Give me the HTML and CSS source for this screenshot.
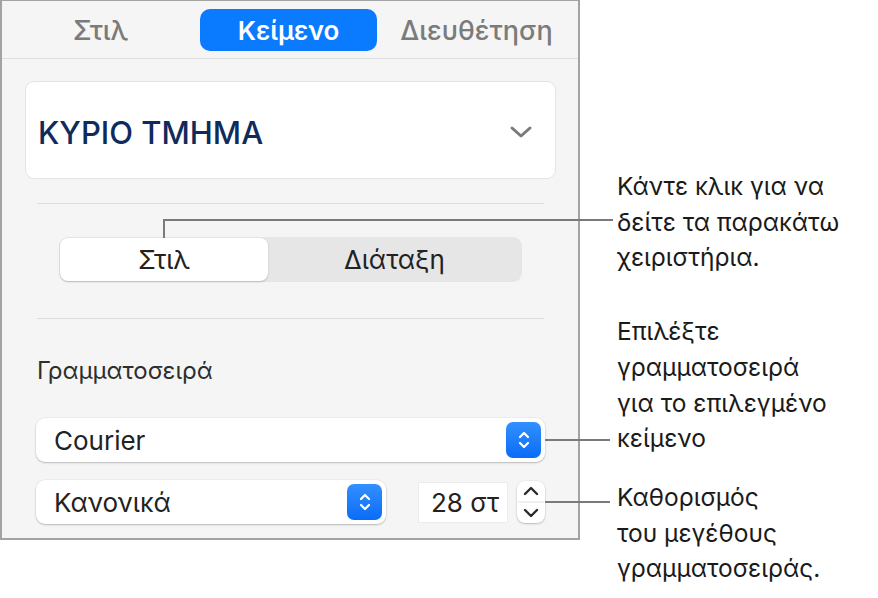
FILE: index.html
```html
<!DOCTYPE html>
<html lang="el">

    <head>

        <meta charset="UTF-8">
        <meta name="viewport" content="width=device-width, initial-scale=1.0">
        <title>Κείμενο</title>

        <link rel="stylesheet" href="styles.css">

    </head>

    <body>

        <main class="page">

            <section class="inspector">

                <nav class="tabs">
                    <span class="tab">Στιλ</span>
                    <span class="tab active">Κείμενο</span>
                    <span class="tab">Διευθέτηση</span>
                </nav>

                <div class="inspector-body">

                    <div class="style-card">
                        <span class="style-name">ΚΥΡΙΟ ΤΜΗΜΑ</span>
                        <svg class="chevron" width="24" height="14" viewBox="0 0 24 14">
                            <path d="M3 3 L12 11 L21 3" fill="none" stroke="#7a7a7a" stroke-width="3" stroke-linecap="round" stroke-linejoin="round"/>
                        </svg>
                    </div>

                    <hr class="divider">

                    <div class="segmented">
                        <span class="segment selected">Στιλ</span>
                        <span class="segment">Διάταξη</span>
                    </div>

                    <hr class="divider">

                    <h3 class="label">Γραμματοσειρά</h3>

                    <div class="popup font-popup">
                        <span>Courier</span>
                        <span class="popup-arrows">
                            <svg width="14" height="22" viewBox="0 0 14 22">
                                <path d="M3 8 L7 4 L11 8 M3 14 L7 18 L11 14" fill="none" stroke="#fff" stroke-width="2.2" stroke-linecap="round" stroke-linejoin="round"/>
                            </svg>
                        </span>
                    </div>

                    <div class="font-row">

                        <div class="popup weight-popup">
                            <span>Κανονικά</span>
                            <span class="popup-arrows">
                                <svg width="14" height="22" viewBox="0 0 14 22">
                                    <path d="M3 8 L7 4 L11 8 M3 14 L7 18 L11 14" fill="none" stroke="#fff" stroke-width="2.2" stroke-linecap="round" stroke-linejoin="round"/>
                                </svg>
                            </span>
                        </div>

                        <span class="size-field">28 στ</span>

                        <span class="stepper">
                            <svg width="28" height="42" viewBox="0 0 28 42">
                                <path d="M8 13 L14 7 L20 13 M8 29 L14 35 L20 29" fill="none" stroke="#2a2a2a" stroke-width="2.4" stroke-linecap="round" stroke-linejoin="round"/>
                                <path d="M1 21 H27" stroke="#e2e2e2" stroke-width="1"/>
                            </svg>
                        </span>

                    </div>

                </div>

            </section>

            <aside class="callouts">
                <p class="callout first">Κάντε κλικ για να<br>δείτε τα παρακάτω<br>χειριστήρια.</p>
                <p class="callout second">Επιλέξτε<br>γραμματοσειρά<br>για το επιλεγμένο<br>κείμενο</p>
                <p class="callout third">Καθορισμός<br>του μεγέθους<br>γραμματοσειράς.</p>
            </aside>

        </main>

    </body>

</html>
```

FILE: styles.css
```css
*
    {
        margin: 0;
        padding: 0;
        box-sizing: border-box;
    }

body
    {
        font-family: 'Inter', 'Noto Sans', sans-serif;
        background-color: #fff;
        color: #1d1d1d;
    }

.page
    {
        display: flex;
        align-items: flex-start;
    }

.inspector
    {
        width: 580px;
        height: 540px;
        background-color: #f5f5f5;
        border: 2px solid #a3a3a3;
        border-top-width: 1px;
    }

.tabs
    {
        display: grid;
        grid-template-columns: repeat(3, 177px);
        gap: 11px;
        padding: 8px 10px 7px;
        border-bottom: 1px solid #dedede;
    }

.tab
    {
        height: 42px;
        display: flex;
        align-items: center;
        justify-content: center;
        font-size: 27px;
        font-weight: 450;
        color: #7b7b7b;
        border-radius: 10px;
        white-space: nowrap;
    }

.tab.active
    {
        background-color: #0a7aff;
        color: #fff;
        font-weight: 600;
        font-size: 26px;
    }

.inspector-body
    {
        padding: 22px 22px 0 23px;
    }

.style-card
    {
        height: 98px;
        background-color: #fff;
        border: 1px solid #e4e4e4;
        border-radius: 9px;
        display: flex;
        align-items: center;
        justify-content: space-between;
        padding: 4px 22px 0 12px;
    }

.style-name
    {
        font-size: 31px;
        font-weight: 500;
        color: #0f2b5c;
    }

.divider
    {
        border: none;
        border-top: 1px solid #dcdcdc;
        margin: 24px 12px 0;
    }

.segmented
    {
        display: flex;
        width: 463px;
        height: 45px;
        margin: 33px 0 0 34px;
        padding: 1px;
        background-color: #e6e6e6;
        border-radius: 9px;
    }

.segmented + .divider
    {
        margin-top: 36px;
    }

.segment
    {
        flex: 1;
        display: flex;
        align-items: center;
        justify-content: center;
        font-size: 26px;
        color: #222;
    }

.segment.selected
    {
        flex: 0 0 208px;
        position: relative;
        background-color: #fff;
        border-radius: 8px;
        box-shadow: 0 1px 2px rgba(0, 0, 0, 0.2);
    }

.segment.selected::before
    {
        content: '';
        position: absolute;
        left: 103px;
        bottom: 100%;
        width: 448px;
        height: 17px;
        border-left: 2px solid #7a7a7a;
        border-top: 2px solid #7a7a7a;
    }

.label
    {
        margin: 38px 0 0 12px;
        font-size: 24px;
        line-height: 28px;
        font-weight: 400;
        color: #2e2e2e;
    }

.popup
    {
        position: relative;
        height: 44px;
        display: flex;
        align-items: center;
        justify-content: space-between;
        padding: 0 4px 0 18px;
        background-color: #fff;
        border-radius: 9px;
        box-shadow: 0 1px 2px rgba(0, 0, 0, 0.22), 0 0 0 0.5px rgba(0, 0, 0, 0.06);
        font-size: 26px;
        color: #222;
    }

.font-popup
    {
        width: 509px;
        margin: 33px 0 0 11px;
    }

.font-popup::after
    {
        content: '';
        position: absolute;
        left: 100%;
        top: 21px;
        width: 65px;
        height: 2px;
        background-color: #7a7a7a;
    }

.popup-arrows
    {
        width: 35px;
        height: 36px;
        display: flex;
        align-items: center;
        justify-content: center;
        border-radius: 7px;
        background: linear-gradient(#3390ff, #0a6cf7);
    }

.font-row
    {
        display: flex;
        align-items: center;
        margin: 18px 0 0 11px;
    }

.weight-popup
    {
        width: 350px;
    }

.size-field
    {
        width: 90px;
        height: 41px;
        margin-left: 32px;
        display: flex;
        align-items: center;
        justify-content: flex-end;
        padding-right: 8px;
        background-color: #fff;
        border: 1px solid #ececec;
        font-size: 26px;
        color: #222;
    }

.stepper
    {
        position: relative;
        width: 28px;
        height: 42px;
        margin-left: 9px;
        display: flex;
        background-color: #fff;
        border-radius: 8px;
        box-shadow: 0 1px 2px rgba(0, 0, 0, 0.22), 0 0 0 0.5px rgba(0, 0, 0, 0.06);
    }

.stepper::after
    {
        content: '';
        position: absolute;
        left: 100%;
        top: 20px;
        width: 65px;
        height: 2px;
        background-color: #7a7a7a;
    }

.callouts
    {
        margin-left: 37px;
        padding-top: 169px;
    }

.callout
    {
        font-size: 24.5px;
        line-height: 35.7px;
        color: #1a1a1a;
        white-space: nowrap;
    }

.callout.second
    {
        margin-top: 38px;
    }

.callout.third
    {
        margin-top: 23px;
    }
```
